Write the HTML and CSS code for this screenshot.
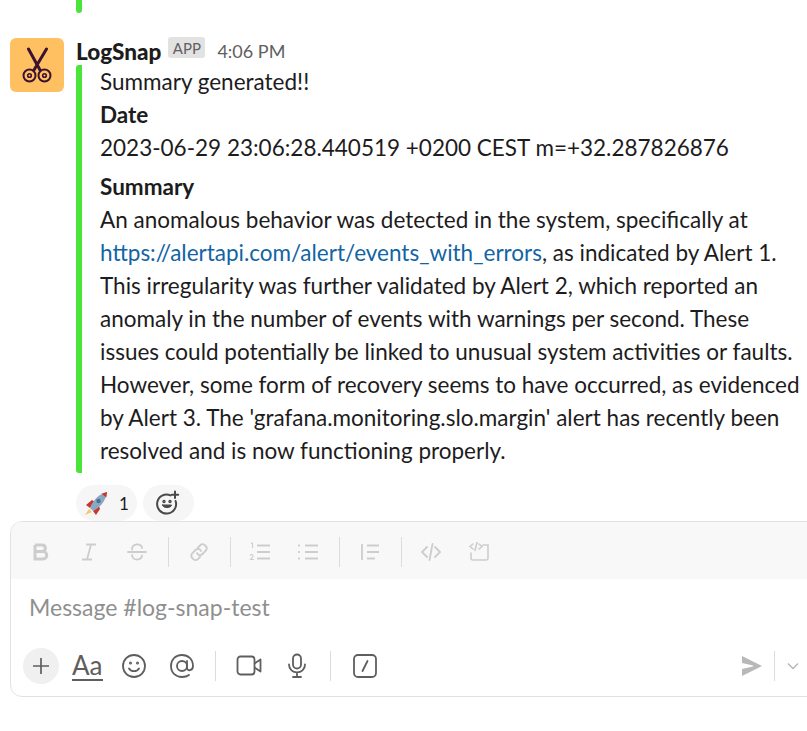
FILE: index.html
```html
<!DOCTYPE html>
<html lang="en">

<head>
    <meta charset="UTF-8">
    <meta name="viewport" content="width=device-width, initial-scale=1.0">
    <title>log-snap-test</title>
    <link rel="stylesheet" href="styles.css">
</head>

<body>
    <div class="prev">
        <div class="prev-bar"></div>
        <p class="prev-text">It is now up and the rate peaked at 10.</p>
    </div>

    <div class="message">
        <div class="avatar">
            <svg width="36" height="36" viewBox="0 0 36 36" fill="none" stroke="#3b1232" stroke-linecap="round">
                <path d="M9.500 2 L21 23" stroke-width="3" />
                <path d="M27.500 2 L15 23" stroke-width="3" />
                <circle cx="10.500" cy="28.500" r="6" stroke-width="2" />
                <circle cx="25.500" cy="28.500" r="6" stroke-width="2" />
                <circle cx="10.500" cy="28.500" r="1.800" stroke-width="1.600" />
                <circle cx="25.500" cy="28.500" r="1.800" stroke-width="1.600" />
            </svg>
        </div>
        <div class="message-body">
            <div class="message-head">
                <span class="sender">LogSnap</span>
                <span class="badge">APP</span>
                <span class="time">4:06 PM</span>
            </div>
            <div class="attachment">
                <p>Summary generated!!</p>
                <p class="field-title">Date</p>
                <p>2023-06-29 23:06:28.440519 +0200 CEST m=+32.287826876</p>
                <p class="field-title second">Summary</p>
                <p>An anomalous behavior was detected in the system, specifically at <a href="#">https://alertapi.com/alert/events_with_errors</a>, as indicated by Alert 1. This irregularity was further validated by Alert 2, which reported an anomaly in the number of events with warnings per second. These issues could potentially be linked to unusual system activities or faults. However, some form of recovery seems to have occurred, as evidenced by Alert 3. The 'grafana.monitoring.slo.margin' alert has recently been resolved and is now functioning properly.</p>
            </div>
            <div class="reactions">
                <div class="reaction">
                    <svg width="28" height="28" viewBox="0 0 28 28">
                        <path d="M2 26 L6 20 L9 23 Z" fill="#f6c66b" />
                        <path d="M3 16 L9 11 L12 13 L7 19 Z" fill="#c8372d" />
                        <path d="M13 26 L17 20 L16 17 L10 22 Z" fill="#c8372d" />
                        <path d="M7 19 C10 11 16 5 24 3 C23 11 18 18 10 22 Z" fill="#8aa8c4" />
                        <path d="M18.500 4.800 L24 3 L23.300 8.500 Z" fill="#c8372d" />
                        <circle cx="15.500" cy="12" r="2.200" fill="#4d6f92" />
                    </svg>
                    <span class="count">1</span>
                </div>
                <div class="reaction add">
                    <svg width="26" height="26" viewBox="0 0 26 26" fill="none" stroke="#4a4a4d" stroke-width="2" stroke-linecap="round">
                        <path d="M15.500 5.400 A9.500 9.500 0 1 0 20.600 11" />
                        <path d="M20 1.500 V8 M16.800 4.700 H23.200" />
                        <circle cx="9" cy="11.500" r="0.700" />
                        <circle cx="15" cy="11.500" r="0.700" />
                        <path d="M7.500 15 H16.500 C16 18.500 8 18.500 7.500 15 Z" fill="#4a4a4d" stroke-width="1" />
                    </svg>
                </div>
            </div>
        </div>
    </div>

    <div class="composer">
        <div class="toolbar">
            <svg class="tool" viewBox="0 0 22 22" fill="none" stroke="#cdcdcd" stroke-width="3">
                <path d="M5 4 H12 C16.500 4 16.500 10.500 12 10.500 H5 M5 10.500 H13 C18 10.500 18 18 13 18 H5 Z M5 4 V18" />
            </svg>
            <svg class="tool" viewBox="0 0 22 22" fill="none" stroke="#cdcdcd" stroke-width="1.800">
                <path d="M8 3.500 H18 M4 18.500 H14 M13 3.500 L9 18.500" />
            </svg>
            <svg class="tool" viewBox="0 0 22 22" fill="none" stroke="#cdcdcd" stroke-width="1.800" stroke-linecap="round">
                <path d="M2 11 H20 M6 8.500 C6 2 16 2 16 7 M6 14 C6 20 16 20 16 14.500" />
            </svg>
            <span class="sep"></span>
            <svg class="tool" viewBox="0 0 22 22" fill="none" stroke="#cdcdcd" stroke-width="1.800" stroke-linecap="round">
                <path d="M10 6.500 L12.500 4 C15.500 1.500 20.500 6 18 9.500 L14.500 13 C12.500 15 9.500 14 9 12" />
                <path d="M12 16 L9.500 18.500 C6.500 20.500 1.500 16 4 12.500 L7.500 9 C9.500 7 12.500 8 13 10" />
            </svg>
            <span class="sep"></span>
            <svg class="tool" viewBox="0 0 22 22" fill="none" stroke="#cdcdcd" stroke-width="1.800">
                <path d="M8 4.500 H21 M8 11 H21 M8 17.500 H21" />
                <path d="M2 2.500 L3.500 2 V7 M1 14.500 C2 13 4.500 13.500 4 15.500 L1.500 18.500 H5" stroke-width="1.100" />
            </svg>
            <svg class="tool" viewBox="0 0 22 22" fill="none" stroke="#cdcdcd" stroke-width="1.800">
                <path d="M8 4.500 H21 M8 11 H21 M8 17.500 H21" />
                <path d="M2 3.500 V5.500 M2 10 V12 M2 16.500 V18.500" />
            </svg>
            <span class="sep"></span>
            <svg class="tool" viewBox="0 0 22 22" fill="none" stroke="#cdcdcd" stroke-width="1.800">
                <path d="M3 3 V19 M8 4.500 H20 M8 11 H20 M8 17.500 H16" />
            </svg>
            <span class="sep"></span>
            <svg class="tool" viewBox="0 0 22 22" fill="none" stroke="#cdcdcd" stroke-width="1.800" stroke-linecap="round">
                <path d="M7 6 L2 11 L7 16 M15 6 L20 11 L15 16 M12.500 3 L9.500 19" />
            </svg>
            <svg class="tool" viewBox="0 0 22 22" fill="none" stroke="#cdcdcd" stroke-width="1.600" stroke-linecap="round">
                <path d="M15 4 H20 V17 Q20 19 18 19 H5 Q3 19 3 17 V12" />
                <path d="M5 3 L2 5.500 L5 8 M11 3 L14 5.500 L11 8 M9 1.500 L7 9.500" />
            </svg>
        </div>
        <div class="input">Message #log-snap-test</div>
        <div class="actions">
            <div class="plus">
                <svg width="18" height="18" viewBox="0 0 18 18" stroke="#5e5e5e" stroke-width="1.700">
                    <path d="M9 1 V17 M1 9 H17" />
                </svg>
            </div>
            <span class="format">Aa</span>
            <svg class="action" viewBox="0 0 26 26" fill="none" stroke="#5e5e5e" stroke-width="1.800" stroke-linecap="round">
                <circle cx="13" cy="13" r="11" />
                <path d="M8 15.500 C10 19 16 19 18 15.500" />
                <circle cx="9.500" cy="10" r="0.600" />
                <circle cx="16.500" cy="10" r="0.600" />
            </svg>
            <svg class="action" viewBox="0 0 26 26" fill="none" stroke="#5e5e5e" stroke-width="1.800" stroke-linecap="round">
                <circle cx="13" cy="13" r="5" />
                <path d="M18 8 V15 C18 18.500 24 18 24 13 C24 6 19 2 13 2 C6 2 2 7 2 13 C2 20 7 24 13 24 C16 24 18 23.500 20 22" />
            </svg>
            <span class="sep"></span>
            <svg class="action" viewBox="0 0 26 26" fill="none" stroke="#5e5e5e" stroke-width="1.800" stroke-linejoin="round">
                <rect x="1.500" y="3.500" width="17" height="18" rx="3" />
                <path d="M18.500 10.500 L24.500 6.500 V18.500 L18.500 14.500" />
            </svg>
            <svg class="action" viewBox="0 0 26 26" fill="none" stroke="#5e5e5e" stroke-width="1.800" stroke-linecap="round">
                <rect x="9" y="1.500" width="8" height="14" rx="4" />
                <path d="M5 11.500 C5 22 21 22 21 11.500 M13 19.500 V24 M9 24 H17" />
            </svg>
            <span class="sep"></span>
            <svg class="action" viewBox="0 0 26 26" fill="none" stroke="#5e5e5e" stroke-width="1.800" stroke-linecap="round">
                <rect x="2" y="2" width="22" height="22" rx="4" />
                <path d="M15.500 8 L10.500 18" />
            </svg>
            <div class="send">
                <svg width="22" height="22" viewBox="0 0 22 22" fill="#b8b8b8">
                    <path d="M1 1 L21 11 L1 21 L1 14 L12 11.500 L12 10.500 L1 8 Z" />
                </svg>
                <span class="sep"></span>
                <svg width="14" height="14" viewBox="0 0 14 14" fill="none" stroke="#b8b8b8" stroke-width="1.500">
                    <path d="M2 4.500 L7 9.500 L12 4.500" />
                </svg>
            </div>
        </div>
    </div>
</body>

</html>
```

FILE: styles.css
```css
* {
    margin: 0;
    padding: 0;
    box-sizing: border-box;
}

body {
    background-color: #fff;
    color: #1d1c1d;
    font-family: Lato, "Liberation Sans", sans-serif;
    font-size: 22.5px;
    line-height: 33px;
    width: 807px;
    height: 731px;
    overflow: hidden;
}

.prev {
    height: 38px;
    padding-left: 76px;
    display: flex;
    gap: 18px;
    overflow: hidden;
}

.prev-bar {
    width: 6px;
    height: 13px;
    border-radius: 0 0 3px 3px;
    background-color: #4ae43a;
}

.prev-text {
    margin-top: -29px;
}

.message {
    padding-left: 10px;
    display: flex;
    gap: 12px;
}

.avatar {
    width: 54px;
    height: 54px;
    flex-shrink: 0;
    border-radius: 6px;
    background-color: #ffc061;
    display: flex;
    align-items: center;
    justify-content: center;
}

.message-body {
    width: 735px;
}

.message-head {
    height: 27px;
    display: flex;
    align-items: center;
    line-height: 27px;
}

.sender {
    font-weight: 900;
    font-size: 22.5px;
}

.badge {
    align-self: flex-start;
    margin: -1px 0 0 7px;
    height: 21px;
    width: 37px;
    border-radius: 3px;
    background-color: #e2e2e2;
    color: #616061;
    font-size: 15px;
    line-height: 22px;
    text-align: center;
}

.time {
    margin-left: 12px;
    color: #616061;
    font-size: 18px;
}

.attachment {
    height: 408px;
    padding-left: 18px;
    border-left: 6px solid #4ae43a;
    border-radius: 3px;
    width: 726px;
}

.field-title {
    font-weight: 700;
}

.field-title.second {
    margin-top: 6px;
}

.attachment a {
    color: #1264a3;
    text-decoration: none;
}

.reactions {
    margin-top: 12px;
    display: flex;
    gap: 6px;
}

.reaction {
    height: 36px;
    width: 61px;
    padding-left: 7px;
    border-radius: 18px;
    background-color: #f6f6f6;
    display: flex;
    align-items: center;
    gap: 8px;
}

.reaction.add {
    width: 51px;
    padding-left: 12px;
}

.count {
    font-size: 17px;
}

.composer {
    margin-left: 10px;
    width: 815px;
    height: 176px;
    border: 1px solid #e2e2e2;
    border-radius: 12px;
    overflow: hidden;
}

.toolbar {
    height: 57px;
    padding: 2px 0 0 6px;
    background-color: #f8f8f8;
    display: flex;
    align-items: center;
}

.tool {
    width: 22px;
    height: 22px;
    margin: 0 13px;
}

.sep {
    width: 1px;
    height: 30px;
    background-color: #dcdcdc;
}

.toolbar .sep {
    margin: 0 5.5px 0 7px;
}

.input {
    height: 69px;
    padding: 12px 0 0 18px;
    color: #8f8f8f;
    font-size: 23px;
}

.actions {
    padding: 0 24px 0 12px;
    display: flex;
    align-items: center;
    height: 36px;
}

.plus {
    width: 36px;
    height: 36px;
    border-radius: 50%;
    background-color: #f0f0f0;
    display: flex;
    align-items: center;
    justify-content: center;
}

.format {
    margin: 0 7px 0 13px;
    color: #5e5e5e;
    font-size: 26px;
    line-height: 28px;
    border-bottom: 2px solid #5e5e5e;
}

.action {
    width: 26px;
    height: 26px;
    margin: 0 11px;
}

.actions .sep {
    margin: 0 9.25px;
}

.send {
    margin-left: auto;
    display: flex;
    align-items: center;
}

.send .sep {
    margin: 0 11px;
}
```
